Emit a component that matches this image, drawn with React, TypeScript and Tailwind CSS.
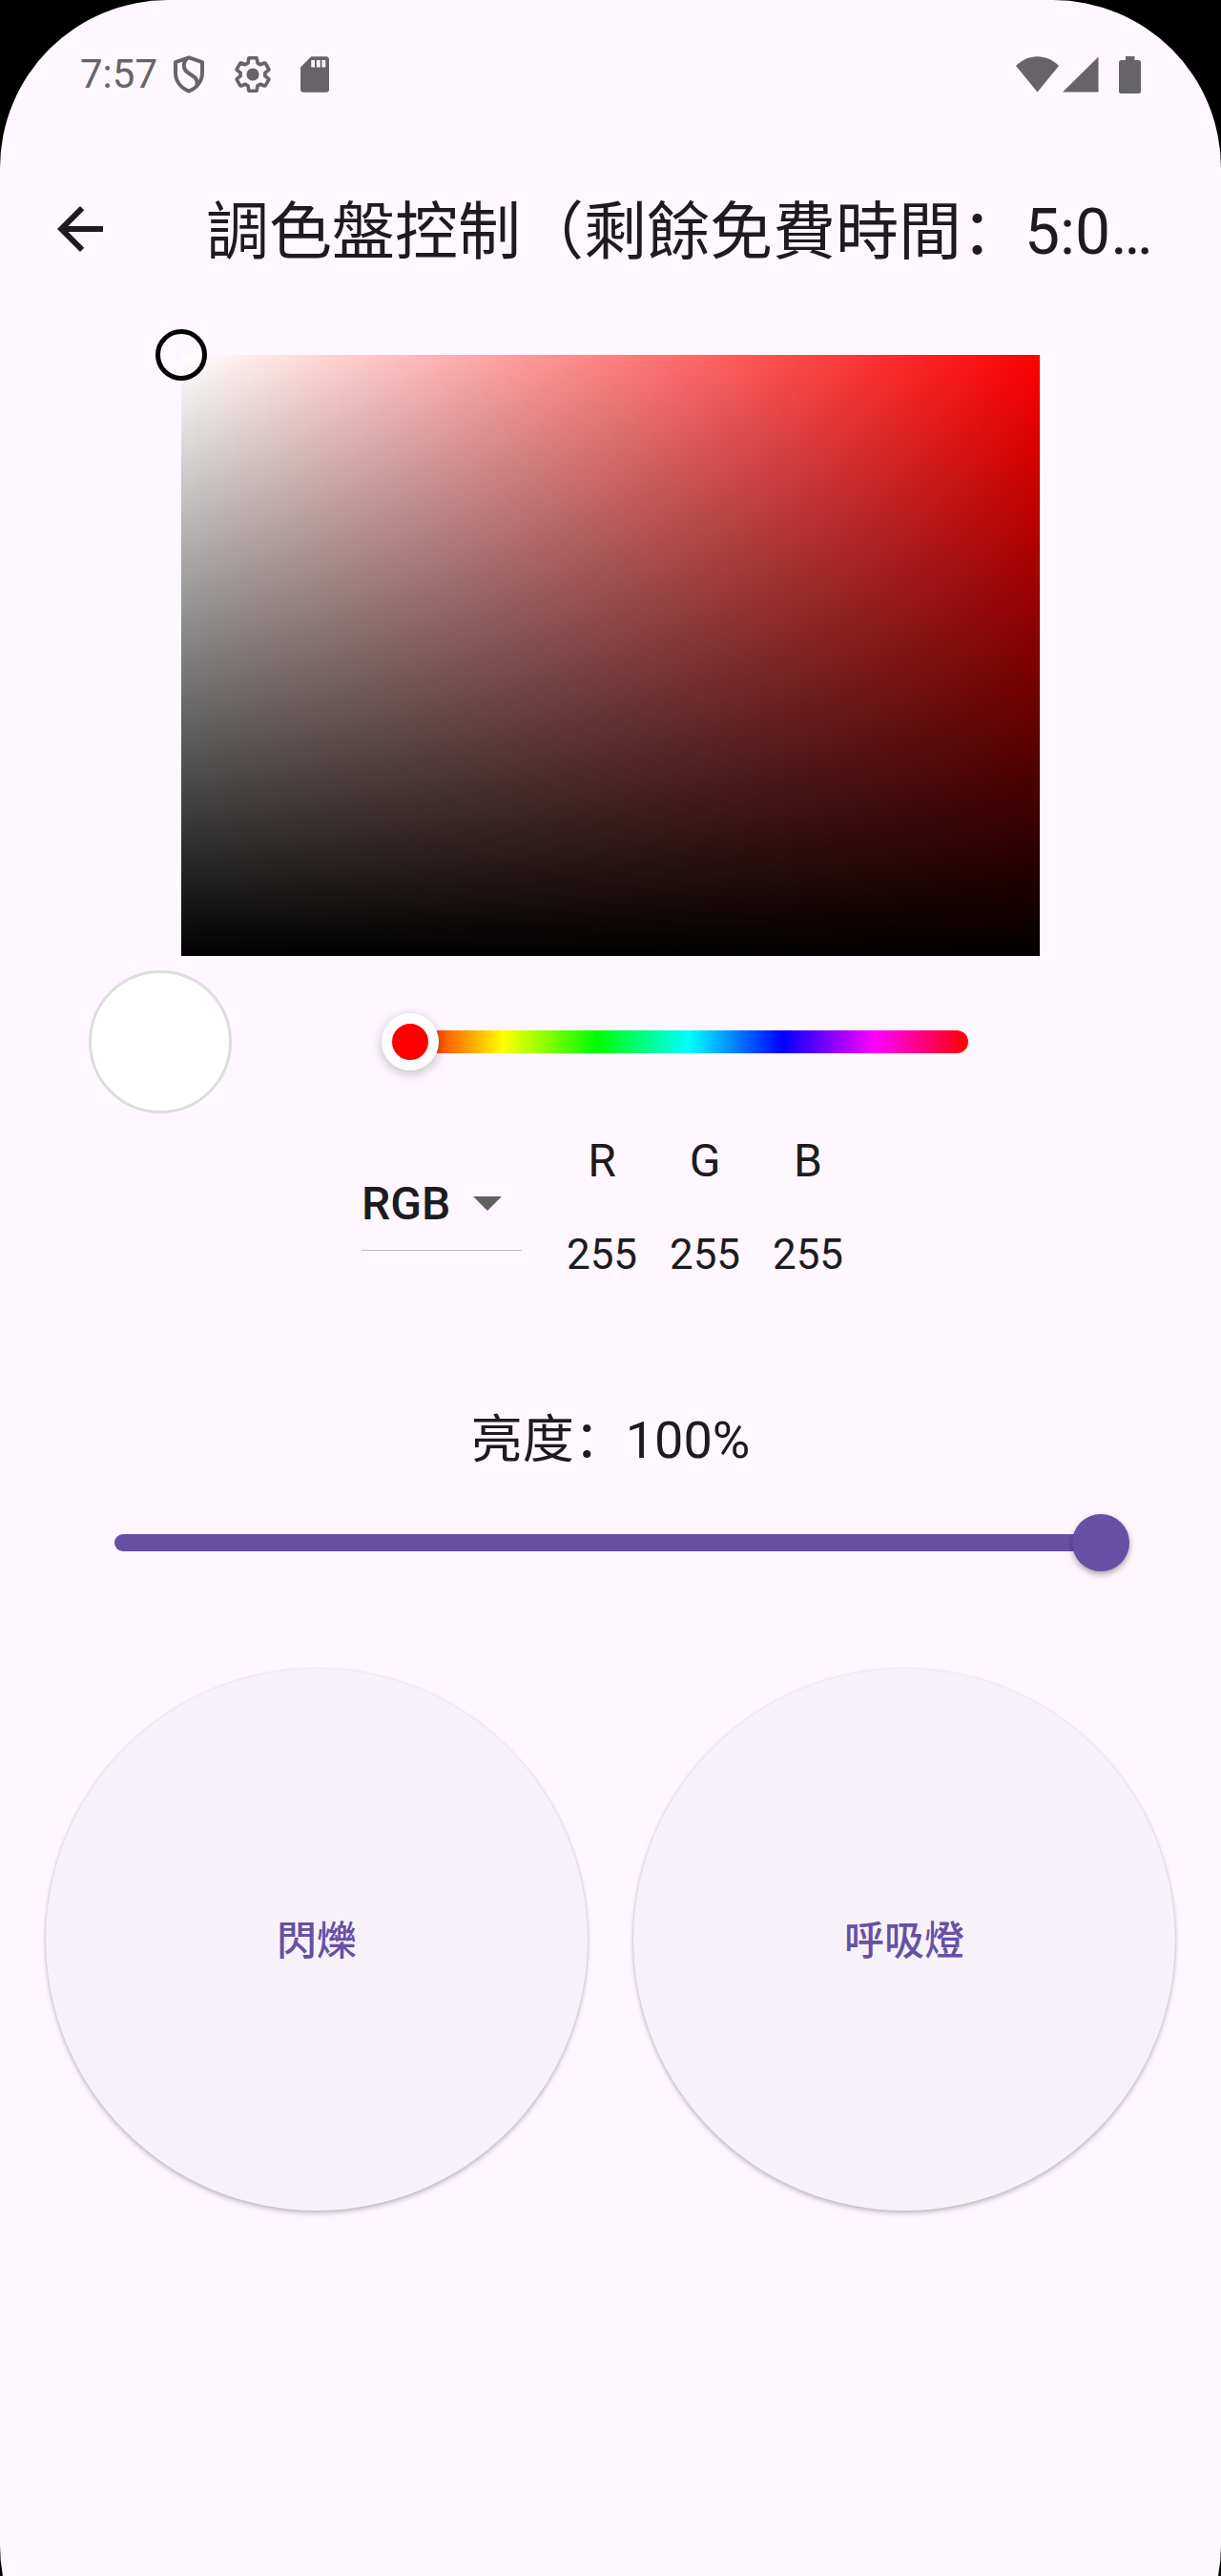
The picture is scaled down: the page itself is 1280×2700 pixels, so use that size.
import React, { useState } from "react";
import { MdArrowBack } from "react-icons/md";

const CHANNELS = ["R", "G", "B"];

const COLOR_MODES = ["RGB", "HSV", "HSL"];

function ShieldIcon() {
  return (
    <svg viewBox="0 0 34 40" className="h-10 w-[34px]" fill="none" stroke="currentColor" strokeWidth="4" strokeLinejoin="round">
      <path d="M17 2.4 31 7.2V18c0 9-5.6 16.2-14 19.6C8.6 34.2 3 27 3 18V7.2Z" />
      <path d="M15.5 3c-4.500 3.500-5 10-1 14 2.200 2.200 5.500 3.200 8.500 6 2.500 2.300 3.300 5.200 2.200 8.500" />
    </svg>
  );
}

function GearIcon() {
  return (
    <svg viewBox="1 1 22 22" className="size-[38px]">
      <path
        d="M19.43 12.98c.04-.32.07-.64.07-.98s-.03-.66-.07-.98l2.11-1.65c.19-.15.24-.42.12-.64l-2-3.46c-.09-.16-.26-.25-.44-.25-.06 0-.12.01-.17.03l-2.49 1c-.52-.4-1.08-.73-1.69-.98l-.38-2.65C14.46 2.18 14.25 2 14 2h-4c-.25 0-.46.18-.49.42l-.38 2.65c-.61.25-1.17.59-1.69.98l-2.49-1c-.06-.02-.12-.03-.18-.03-.17 0-.34.09-.43.25l-2 3.46c-.13.22-.07.49.12.64l2.11 1.65c-.04.32-.07.65-.07.98s.03.66.07.98l-2.11 1.65c-.19.15-.24.42-.12.64l2 3.46c.09.16.26.25.44.25.06 0 .12-.01.17-.03l2.49-1c.52.4 1.08.73 1.69.98l.38 2.65c.03.24.24.42.49.42h4c.25 0 .46-.18.49-.42l.38-2.65c.61-.25 1.17-.59 1.69-.98l2.49 1c.06.02.12.03.18.03.17 0 .34-.09.43-.25l2-3.46c.12-.22.07-.49-.12-.64l-2.11-1.65z"
        fill="none"
        stroke="currentColor"
        strokeWidth="2.1"
        strokeLinejoin="round"
      />
      <circle cx="12" cy="12" r="3.8" fill="currentColor" />
    </svg>
  );
}

function SdCardIcon() {
  return (
    <svg viewBox="4 2 16 20" className="h-[38px] w-[30px]" fill="currentColor">
      <path d="M18.5 2H10L4 8v12.500c0 .8.700 1.500 1.500 1.500h13c.8 0 1.500-.7 1.500-1.500v-17c0-.8-.7-1.500-1.500-1.500zM12 8h-2V4h2v4zm3 0h-2V4h2v4zm3 0h-2V4h2v4z" />
    </svg>
  );
}

function StatusBar() {
  return (
    <div className="flex h-[156px] items-center justify-between px-[84px] text-[#666469]">
      <div className="flex items-center">
        <span className="text-[42px] leading-[48px]">7:57</span>
        <div className="ml-4 flex items-center gap-[31px]">
          <ShieldIcon />
          <GearIcon />
          <SdCardIcon />
        </div>
      </div>
      <div className="flex items-center">
        <svg viewBox="0 0 45 38" className="h-[38px] w-[45px]" fill="currentColor">
          <path d="M22.5 37.5 0 10C6 3.8 14 .2 22.5 .2S39 3.8 45 10Z" />
        </svg>
        <svg viewBox="0 0 38 38" className="ml-1 size-[38px]" fill="currentColor">
          <path d="M37.5 0.5V37.5H0Z" />
        </svg>
        <svg viewBox="0 0 23 39" className="ml-[21px] h-[39px] w-[23px]" fill="currentColor">
          <path d="M7 0h9.500v4H20.500A2.500 2.500 0 0 1 23 6.500v30a2.500 2.500 0 0 1-2.500 2.500h-18A2.500 2.500 0 0 1 0 36.500v-30A2.500 2.500 0 0 1 2.500 4H7Z" />
        </svg>
      </div>
    </div>
  );
}

export default function App() {
  const [mode, setMode] = useState("RGB");
  const [hue, setHue] = useState(0);
  const [brightness, setBrightness] = useState(100);

  return (
    <div className="flex min-h-screen flex-col overflow-hidden bg-black font-[Roboto,'Noto_Sans_CJK_SC',sans-serif]">
      <div className="-mb-36 flex-1 rounded-[176px] bg-[#fef7ff] pb-36 text-[#1d1b20]">
        <StatusBar />

        {/* App bar */}
        <header className="flex h-[168px] items-center gap-24 px-12">
          <button type="button" aria-label="返回" className="shrink-0">
            <MdArrowBack className="size-[72px]" />
          </button>
          <h1 className="min-w-0 flex-1 truncate pt-2 text-[66px] leading-[96px]">調色盤控制（剩餘免費時間：5:0…</h1>
        </header>

        <main>
          {/* Saturation / value area */}
          <div className="mx-auto mt-12 w-[900px] max-w-full">
            <div
              className="relative aspect-[10/7] bg-[linear-gradient(to_bottom,transparent,#000),linear-gradient(to_right,#fff,var(--hue))]"
              style={{ "--hue": `hsl(${hue} 100% 50%)` } as React.CSSProperties}
            >
              <span className="absolute -top-[27px] -left-[27px] size-[54px] rounded-full border-[5px] border-black" />
            </div>
          </div>

          {/* Current color and hue */}
          <div className="mt-[15px] flex items-center gap-[157px] pr-[235px] pl-[93px]">
            <div className="size-[150px] shrink-0 rounded-full border-3 border-[#dddddd] bg-white" />
            <div className="grid flex-1 items-center">
              <div className="col-start-1 row-start-1 mx-[30px] h-6 rounded-full bg-[linear-gradient(to_right,#f00,#ff0,#0f0,#0ff,#00f,#f0f,#f00)]" />
              <input
                type="range"
                aria-label="色相"
                min={0}
                max={360}
                value={hue}
                onChange={(e) => setHue(Number(e.target.value))}
                style={{ "--hue": `hsl(${hue} 100% 50%)` } as React.CSSProperties}
                className="col-start-1 row-start-1 h-[60px] w-full appearance-none bg-transparent [&::-webkit-slider-thumb]:size-[60px] [&::-webkit-slider-thumb]:appearance-none [&::-webkit-slider-thumb]:rounded-full [&::-webkit-slider-thumb]:border-[11px] [&::-webkit-slider-thumb]:border-white [&::-webkit-slider-thumb]:bg-(--hue) [&::-webkit-slider-thumb]:shadow-[0_3px_12px_rgba(0,0,0,0.25)]"
              />
            </div>
          </div>

          {/* Channel values */}
          <div className="mt-5 flex items-center justify-center gap-[30px]">
            <div className="relative mb-2 border-b border-[#bdbdbd]">
              <select
                aria-label="色彩模式"
                value={mode}
                onChange={(e) => setMode(e.target.value)}
                className="block h-24 w-[168px] appearance-none bg-transparent text-[48px] leading-[56px] font-medium"
              >
                {COLOR_MODES.map((m) => (
                  <option key={m}>{m}</option>
                ))}
              </select>
              <svg viewBox="0 0 30 15" className="pointer-events-none absolute top-10 right-[21px] h-[15px] w-[30px]">
                <path d="M0 0h30L15 15z" fill="#616161" />
              </svg>
            </div>
            <dl className="flex">
              {CHANNELS.map((name) => (
                <div key={name} className="flex w-[108px] flex-col items-center gap-[38px]">
                  <dt className="text-[48px] leading-[60px]">{name}</dt>
                  <dd className="text-[44px] leading-[60px]">255</dd>
                </div>
              ))}
            </dl>
          </div>

          {/* Brightness */}
          <div className="mt-[129px] px-24">
            <label htmlFor="brightness" className="block text-center text-[54px] leading-[72px]">
              亮度：{brightness}%
            </label>
            <div className="mt-[41px] grid items-center">
              <div className="col-start-1 row-start-1 mx-6 h-[18px] rounded-full bg-[#e6e0e9]">
                <div className="h-full rounded-full bg-[#6750a4]" style={{ width: `${brightness}%` }} />
              </div>
              <input
                id="brightness"
                type="range"
                min={0}
                max={100}
                value={brightness}
                onChange={(e) => setBrightness(Number(e.target.value))}
                className="col-start-1 row-start-1 h-[60px] w-full appearance-none bg-transparent [&::-webkit-slider-thumb]:size-[60px] [&::-webkit-slider-thumb]:appearance-none [&::-webkit-slider-thumb]:rounded-full [&::-webkit-slider-thumb]:bg-[#6750a4] [&::-webkit-slider-thumb]:shadow-[0_3px_6px_rgba(0,0,0,0.35)]"
              />
            </div>
          </div>

          {/* Effects */}
          <div className="mt-[102px] grid grid-cols-2 gap-12 px-12">
            {["閃爍", "呼吸燈"].map((label) => (
              <button
                key={label}
                type="button"
                className="aspect-square rounded-full bg-[#f7f2fa] pt-1 text-[42px] leading-[60px] font-medium text-[#6750a4] shadow-[0_3px_5px_rgba(0,0,0,0.22),0_0_3px_rgba(0,0,0,0.12)]"
              >
                {label}
              </button>
            ))}
          </div>
        </main>
      </div>
    </div>
  );
}
